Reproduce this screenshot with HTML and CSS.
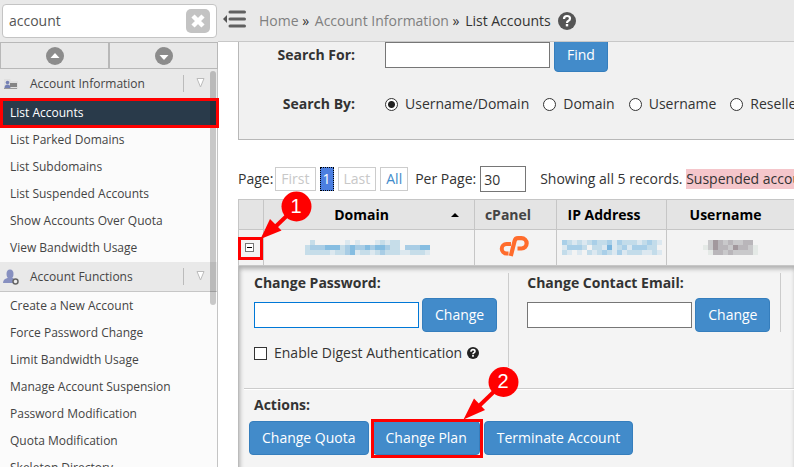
FILE: index.html
```html
<!DOCTYPE html>
<html lang="en">
<head>
<meta charset="utf-8">
<title>List Accounts</title>
<link rel="stylesheet" href="styles.css">
</head>
<body>
<div class="app">
  <aside class="sidebar">
    <form class="search">
      <input class="search-input" type="text" value="account" aria-label="Search menu">
      <button class="search-clear" type="reset" aria-label="Clear">
        <svg width="14" height="14" viewBox="0 0 14 14"><path d="M2 2 L12 12 M12 2 L2 12" stroke="#fff" stroke-width="4.500"/></svg>
      </button>
    </form>
    <div class="jump">
      <button type="button" aria-label="Previous"><svg width="18" height="18" viewBox="0 0 18 18"><circle cx="9" cy="9" r="9" fill="#8c8c8c"/><path d="M4.500 11 L9 6 L13.500 11Z" fill="#fff"/></svg></button>
      <button type="button" aria-label="Next"><svg width="18" height="18" viewBox="0 0 18 18"><circle cx="9" cy="9" r="9" fill="#8c8c8c"/><path d="M4.500 8 L9 13 L13.500 8Z" fill="#fff"/></svg></button>
    </div>
    <nav class="menu">
      <h2 class="group">
        <svg width="16" height="14" viewBox="0 0 16 14"><path d="M1 2h6l1 2h7v8H1z" fill="#e0e0e0"/><circle cx="4.500" cy="5.500" r="1.800" fill="#7480b4"/><path d="M1.500 11q0-3.500 3-3.500t3 3.500z" fill="#7480b4"/><path d="M7 6h7v4H7z" fill="#858585"/><path d="M1 11.500h13" stroke="#999"/></svg>
        <span>Account Information</span>
        <svg class="fold" width="10" height="10" viewBox="0 0 10 10"><path d="M1 .5h7L4.500 9Z" fill="#fff" stroke="#bbb"/></svg>
      </h2>
      <ul>
        <li class="active"><a href="#">List Accounts</a></li>
        <li><a href="#">List Parked Domains</a></li>
        <li><a href="#">List Subdomains</a></li>
        <li><a href="#">List Suspended Accounts</a></li>
        <li><a href="#">Show Accounts Over Quota</a></li>
        <li><a href="#">View Bandwidth Usage</a></li>
      </ul>
      <h2 class="group">
        <svg width="16" height="16" viewBox="0 0 16 16"><ellipse cx="7" cy="5" rx="3.500" ry="4.500" fill="#8790c0"/><path d="M0 14q0-4 4.500-5h5q2 0 2 5z" fill="#8790c0"/><circle cx="12.500" cy="12.500" r="2.500" fill="#eee" stroke="#666" stroke-width="1.500"/></svg>
        <span>Account Functions</span>
        <svg class="fold" width="10" height="10" viewBox="0 0 10 10"><path d="M1 .5h7L4.500 9Z" fill="#fff" stroke="#bbb"/></svg>
      </h2>
      <ul>
        <li><a href="#">Create a New Account</a></li>
        <li><a href="#">Force Password Change</a></li>
        <li><a href="#">Limit Bandwidth Usage</a></li>
        <li><a href="#">Manage Account Suspension</a></li>
        <li><a href="#">Password Modification</a></li>
        <li><a href="#">Quota Modification</a></li>
        <li><a href="#">Skeleton Directory</a></li>
      </ul>
      <div class="scroll-thumb"></div>
    </nav>
  </aside>

  <div class="main">
    <header class="topbar">
      <button class="collapse" type="button" aria-label="Collapse menu">
        <svg width="24" height="18" viewBox="0 0 24 18"><path d="M0 9 L4 5 V13Z" fill="#555"/><path d="M7 2h14.500M7 9h14.500M7 16h14.500" stroke="#606060" stroke-width="3" stroke-linecap="round"/></svg>
      </button>
      <nav class="crumbs"><a href="#">Home</a> » <a href="#">Account Information</a> » <span>List Accounts</span></nav>
      <svg class="help" width="18" height="18" viewBox="0 0 18 18"><circle cx="9" cy="9" r="9" fill="#555"/><path d="M6 7q0-3 3-3t3 2.500q0 1.500-1.500 2.200T9 11" fill="none" stroke="#fff" stroke-width="2.200"/><rect x="7.800" y="12" width="2.400" height="2.400" fill="#fff"/></svg>
    </header>

    <main class="content">
      <form class="finder">
        <div class="finder-row">
          <label class="finder-label" for="term">Search For:</label>
          <input class="field" id="term" type="text">
          <button class="btn" type="button">Find</button>
        </div>
        <div class="finder-row by">
          <span class="finder-label">Search By:</span>
          <label><input type="radio" name="by" checked>Username/Domain</label>
          <label><input type="radio" name="by">Domain</label>
          <label><input type="radio" name="by">Username</label>
          <label><input type="radio" name="by">Reseller</label>
        </div>
      </form>

      <div class="pager">
        <span>Page:</span>
        <span class="page off">First</span>
        <span class="page current">1</span>
        <span class="page off">Last</span>
        <a class="page" href="#">All</a>
        <label for="per">Per Page:</label>
        <input class="field per" id="per" type="text" value="30">
        <span class="count">Showing all 5 records. <mark>Suspended accounts</mark></span>
      </div>

      <table class="accounts">
        <colgroup><col class="c-toggle"><col class="c-domain"><col class="c-panel"><col class="c-ip"><col></colgroup>
        <thead>
          <tr><th></th><th class="sorted">Domain<svg width="8" height="4" viewBox="0 0 8 4"><path d="M0 4L4 0L8 4Z"/></svg></th><th class="plain">cPanel</th><th>IP Address</th><th class="user">Username</th></tr>
        </thead>
        <tbody>
          <tr>
            <td class="toggle-cell">
              <button class="toggle" type="button" aria-label="Collapse row"></button>
              <svg class="callout one" width="60" height="60" viewBox="0 0 60 60"><path d="M37 18L12 42" stroke="#f00" stroke-width="4"/><path d="M1.500 50L11 30L22.500 41.500Z" fill="#f00"/><circle cx="37.500" cy="17.500" r="15" fill="#f00"/><text x="37" y="24">1</text></svg>
            </td>
            <td><svg class="mosaic" data-name="domain" width="125" height="15"></svg></td>
            <td><svg class="logo" width="30" height="24" viewBox="0 0 30 24"><path d="M12 8H7.500a4.700 4.700 0 0 0 0 9.500H9.500" fill="none" stroke="#ff6c2c" stroke-width="4"/><path d="M11.800 20L15.600 5Q16.300 2.200 19 2.200H22.500a5 5 0 0 1 0 10.300H18.500" fill="none" stroke="#ff6c2c" stroke-width="4.200"/></svg></td>
            <td class="masked"><svg class="mosaic" data-name="ip" width="100" height="15"></svg></td>
            <td class="masked"><svg class="mosaic" data-name="user" width="55" height="15"></svg></td>
          </tr>
        </tbody>
      </table>

      <section class="details">
        <div class="panels">
          <form class="panel tall">
            <label class="title" for="pw">Change Password:</label>
            <div class="line"><input class="field focus" id="pw" type="text"><button class="btn" type="button">Change</button></div>
            <label class="digest"><input type="checkbox">Enable Digest Authentication
              <svg width="12" height="12" viewBox="0 0 18 18"><circle cx="9" cy="9" r="9" fill="#222"/><path d="M6 7q0-3 3-3t3 2.500q0 1.500-1.500 2.200T9 11" fill="none" stroke="#fff" stroke-width="2.400"/><rect x="7.700" y="12" width="2.600" height="2.600" fill="#fff"/></svg></label>
          </form>
          <form class="panel">
            <label class="title" for="mail">Change Contact Email:</label>
            <div class="line"><input class="field" id="mail" type="text"><button class="btn" type="button">Change</button></div>
          </form>
        </div>
        <div class="actions">
          <h3 class="title">Actions:</h3>
          <div class="buttons">
            <button class="btn" type="button">Change Quota</button>
            <span class="marked"><button class="btn" type="button">Change Plan</button>
              <svg class="callout two" width="60" height="60" viewBox="0 0 60 60"><path d="M43 18L17 43" stroke="#f00" stroke-width="4"/><path d="M2.500 55.500L13 34.500L24 46Z" fill="#f00"/><circle cx="42.500" cy="18" r="15" fill="#f00"/><text x="42" y="24">2</text></svg></span>
            <button class="btn" type="button">Terminate Account</button>
          </div>
        </div>
      </section>
    </main>
  </div>
</div>
<script src="mosaic.js"></script>
</body>
</html>
```

FILE: styles.css
```css
*, *::after { box-sizing: border-box; }
body {
  margin: 0;
  height: 100vh;
  overflow: hidden;
  font: 14px/20px "Open Sans", sans-serif;
  color: #333;
  background: #fff;
}
button, input { font: inherit; color: inherit; margin: 0; }
a { color: inherit; text-decoration: none; }
ul, h2, h3 { margin: 0; padding: 0; list-style: none; font: inherit; }
svg { display: block; flex: none; }

.app { display: grid; grid-template-columns: 218px minmax(0, 1fr); height: 100%; }

.sidebar { position: relative; z-index: 1; display: flex; flex-direction: column; min-height: 0; background: #e9e9e9; }
.search { display: flex; align-items: center; margin: 4px 1px 4px 2px; height: 34px; padding-right: 6px; background: #fff; border: 1px solid #c4c4c4; border-radius: 4px; }
.search-input { flex: 1; min-width: 0; border: 0; padding: 0 6px; background: none; outline: 0; color: #555; }
.search-clear { display: grid; place-items: center; width: 24px; height: 24px; padding: 0; border: 0; border-radius: 5px; background: #c3c3c3; }
.jump { display: grid; grid-template-columns: 1fr 1fr; height: 27px; }
.jump button { display: grid; place-items: center; padding: 0; border: 1px solid #b8b8b8; background: #e8e8e8; }
.menu { position: relative; flex: 1; min-height: 0; overflow-x: visible; overflow-y: clip; background: #fbfbfb; border-right: 1px solid #c4c4c4; font-size: 12px; color: #444; }
.group { display: flex; align-items: center; height: 30px; padding: 0 11px 0 3px; background: #e9e9e9; border-bottom: 1px solid #c6c6c6; }
.group span { flex: 1; margin-left: 11px; }
.fold { width: 23px; height: 17px; padding: 3px 0 4px 12px; border-left: 1px solid #bbb; }
.menu ul { padding-bottom: 1px; }
.menu li { height: 27px; padding-left: 10px; line-height: 27px; white-space: nowrap; }
.menu li.active { position: relative; background: #293a4a; color: #fff; }
.menu li.active::after { content: ""; position: absolute; inset: -1px -2px -2px 0; border: 3px solid #f00; z-index: 2; }
.scroll-thumb { position: absolute; top: 2px; right: 1px; width: 6px; height: 234px; border-radius: 3px; background: rgba(0, 0, 0, .2); }

.main { display: flex; flex-direction: column; min-width: 0; min-height: 0; }
.topbar { display: flex; align-items: center; flex: none; height: 42px; padding-left: 5px; background: #e9e9e9; border-bottom: 1px solid #c8c8c8; }
.collapse { padding: 0 0 4px; border: 0; background: none; }
.crumbs { margin-left: 12px; white-space: nowrap; }
.crumbs a { color: #808080; }
.crumbs a + a, .crumbs span { margin-left: 2px; }
.help { margin-left: 7px; }
.content { flex: 1; min-height: 0; overflow: hidden; padding-left: 20px; }

.btn { height: 34px; padding: 0 12px; border: 1px solid #357ebd; border-radius: 4px; background: #428bca; color: #fff; white-space: nowrap; }
.field { width: 165px; height: 26px; padding: 0 3px; border: 1px solid #767676; background: #fff; outline: 0; }
.field.focus { border-color: #0078d7; }

.finder { display: flex; flex-direction: column; margin-top: -20px; height: 118px; padding-top: 15px; background: #f1f1f1; border: 1px solid #b8b8b8; border-width: 1px 0 1px 1px; white-space: nowrap; }
.finder-row { display: flex; align-items: center; gap: 4px; height: 34px; }
.finder-label { flex: none; width: 116px; margin-right: 26px; text-align: right; font-weight: bold; }
.by { height: 20px; margin-top: 22px; gap: 14px; }
.by .finder-label { margin-right: 16px; }
.by label { display: flex; flex: none; align-items: center; }
input[type="radio"] { appearance: none; width: 13px; height: 13px; margin-right: 7px; border: 1px solid #333; border-radius: 50%; background: #fff; }
input[type="radio"]:checked { background: radial-gradient(circle, #222 3px, #fff 4px); }

.pager { display: flex; align-items: center; gap: 4px; height: 26px; margin-top: 26px; white-space: nowrap; }
.pager > span:first-child { margin-right: -2px; }
.page { height: 24px; padding: 0 5px; border: 1px solid #ccc; line-height: 22px; color: #428bca; }
.page.off { color: #c8c8c8; }
.page.current { padding: 0 2px; border: 1px dotted #000; background: #4c7fe0; color: #fff; }
.pager label { margin-left: 3px; }
.per { width: 46px; }
.count { margin-left: 10px; }
.count mark { display: inline-block; background: #f5c6cb; color: inherit; }

.accounts { width: 100%; margin-top: 7px; table-layout: fixed; border-collapse: collapse; }
.c-toggle { width: 25px; }
.c-domain { width: 211px; }
.c-panel { width: 82px; }
.c-ip { width: 110px; }
.accounts th, .accounts td { position: relative; padding: 0; border: 1px solid #c6c6c6; border-right: 0; text-align: center; }
.accounts th { height: 30px; padding-right: 15px; background: #e4e4e4; color: #000; }
.accounts th.plain { color: #444; }
.accounts th.user { padding-right: 10px; }
.accounts td { height: 36px; background: #f3f3f3; }
.accounts tbody td { padding-right: 3px; }
.accounts tbody td.masked { padding-right: 0; }
.sorted svg { position: absolute; right: 15px; top: 13px; }
.mosaic, .logo { margin: 0 auto; }
.toggle { display: block; width: 9px; height: 9px; margin: 0 auto; padding: 0; border: 1px solid #777; background: linear-gradient(#000, #000) center / 5px 1px no-repeat #fff; }
.toggle-cell::after { content: ""; position: absolute; top: 7px; left: -1px; width: 25px; height: 23px; border: 3px solid #f00; }
.callout { position: absolute; z-index: 3; }
.callout text { fill: #fff; font: 20px "Liberation Sans", sans-serif; text-anchor: middle; }
.one { left: 20px; top: -41px; }
.two { left: 88px; top: -57px; }

.details { min-height: 400px; padding: 7px 0 0 5px; background: #f4f4f4; border-left: 1px solid #bbb; box-shadow: inset 1px 3px 4px #b0b0b0; }
.panels { display: flex; height: 116px; border-bottom: 1px solid #ccc; box-shadow: 0 1px #fff; }
.panel { flex: none; height: 59px; padding: 0 10px 0 18px; border-right: 1px solid #ccc; }
.panel.tall { height: 94px; padding: 0 11px 0 10px; }
.title { display: block; font-weight: bold; }
.line { display: flex; align-items: center; gap: 3px; margin-top: 5px; }
.digest { display: flex; align-items: center; margin-top: 11px; white-space: nowrap; }
.digest svg { margin-left: 5px; }
input[type="checkbox"] { appearance: none; width: 13px; height: 13px; margin-right: 7px; border: 1px solid #333; background: #fff; }
.actions { padding-top: 6px; }
.actions .title { padding-left: 10px; }
.buttons { display: flex; gap: 4px; margin: 6px 0 0 5px; }
.marked { position: relative; }
.marked::after { content: ""; position: absolute; inset: -2px -3px -3px -2px; border: 3px solid #f00; }
```

FILE: mosaic.js
```js
// Paints masked cell values as coarse blocks, one colour per block.
const palettes = {
  domain: ["#f3f3f3", "#dce8ef", "#c6dde9", "#a9cde5", "#86bde1"],
  ip: ["#f3f3f3", "#dce8f0", "#c3dcea", "#a9cfe8", "#79b4de"],
  user: ["#f3f3f3", "#e4e9e6", "#c9c9cb", "#b9b6ba", "#a2989d"]
};
const rows = {
  domain: ["0200000010100012122000000", "2333444234334344322033344", "2222212234122123222112221"],
  ip: ["32121232231322212321", "13332022141231333220", "21010212321312221121"],
  user: ["02432322330", "12433243321", "01332322221"]
};
document.querySelectorAll(".mosaic").forEach(svg => {
  const name = svg.dataset.name;
  svg.setAttribute("shape-rendering", "crispEdges");
  rows[name].forEach((row, y) => [...row].forEach((level, x) => {
    const cell = document.createElementNS("http://www.w3.org/2000/svg", "rect");
    const box = { x: x * 5, y: y * 5, width: 5, height: 5, fill: palettes[name][level] };
    Object.entries(box).forEach(([key, value]) => cell.setAttribute(key, value));
    svg.append(cell);
  }));
});
```
